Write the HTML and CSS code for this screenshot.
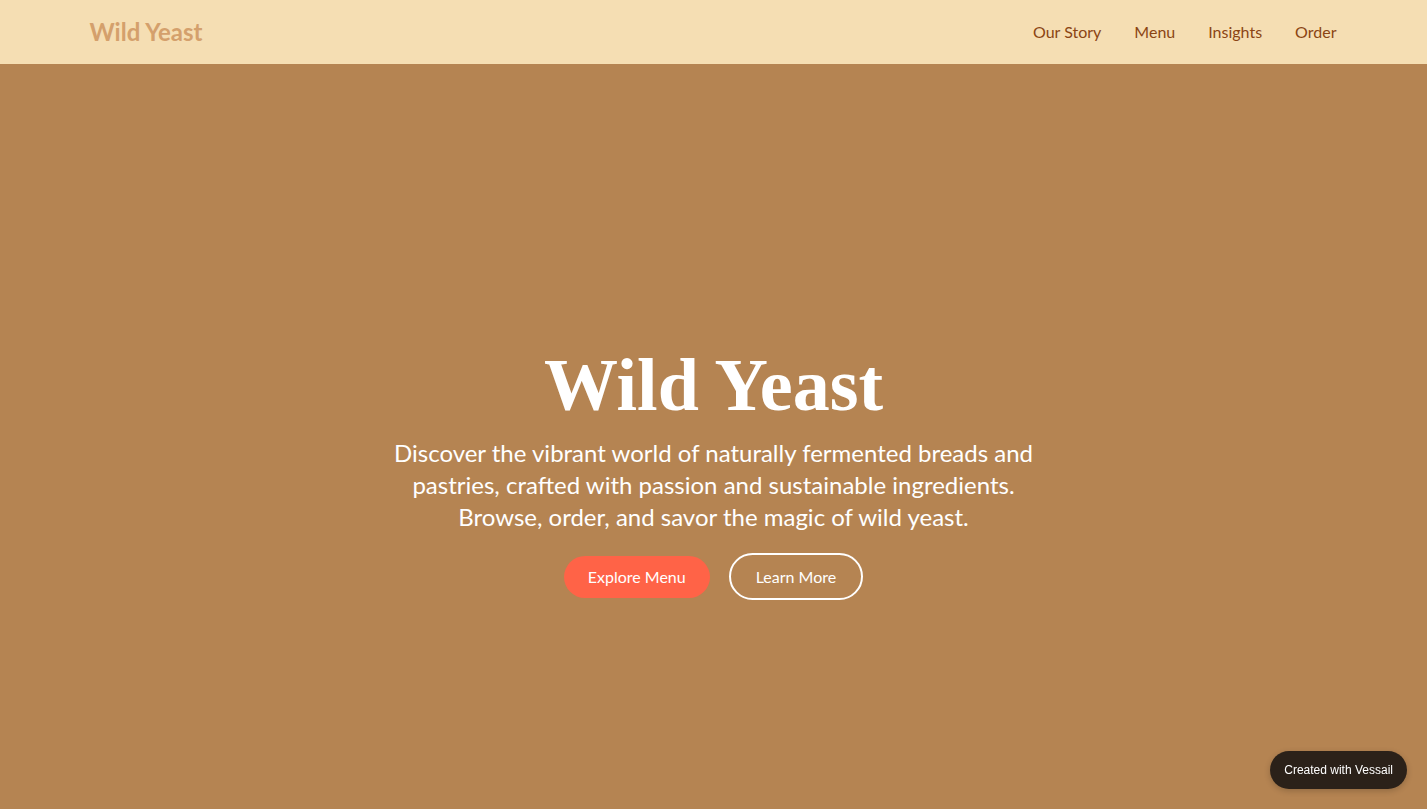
FILE: index.html
```html
<!DOCTYPE html>
<html lang="en">
<head>
<meta charset="utf-8">
<title>Wild Yeast</title>
<link rel="stylesheet" href="styles.css">
</head>
<body>
<header class="site-header">
  <div class="container header-inner">
    <a class="logo" href="#">Wild Yeast</a>
    <nav class="nav">
      <a href="#">Our Story</a>
      <a href="#">Menu</a>
      <a href="#">Insights</a>
      <a href="#">Order</a>
    </nav>
  </div>
</header>
<main class="hero">
  <div class="hero-content">
    <h1 class="hero-title">Wild Yeast</h1>
    <p class="hero-text">Discover the vibrant world of naturally fermented breads and pastries, crafted with passion and sustainable ingredients. Browse, order, and savor the magic of wild yeast.</p>
    <div class="hero-actions">
      <a class="btn btn-primary" href="#">Explore Menu</a>
      <a class="btn btn-outline" href="#">Learn More</a>
    </div>
  </div>
</main>
<a class="badge" href="#">Created with Vessail</a>
</body>
</html>
```
FILE: styles.css
```css
* { box-sizing: border-box; }
html, body { margin: 0; padding: 0; }
body {
  font-family: Lato, "Open Sans", sans-serif;
  background: #b58452;
  color: #fff;
}
a { text-decoration: none; }
.container {
  max-width: 1280px;
  margin: 0 auto;
  padding: 0 16px;
}
.site-header {
  background: #f5deb3;
  height: 64px;
}
.header-inner {
  height: 64px;
  display: flex;
  align-items: center;
  justify-content: space-between;
}
.logo {
  font-size: 24px;
  font-weight: 700;
  color: #d4a06c;
  line-height: 64px;
  padding-bottom: 1px;
}
.nav {
  display: flex;
  gap: 33px;
  padding-right: 1px;
  padding-bottom: 2px;
}
.nav a {
  color: #8b4513;
  font-size: 16px;
}
.hero {
  min-height: 100vh;
  padding-top: 12px;
  display: flex;
  align-items: center;
  justify-content: center;
  text-align: center;
}
.hero-content {
  max-width: 640px;
  display: flex;
  flex-direction: column;
  align-items: center;
}
.hero-title {
  font-family: "Liberation Serif", "Times New Roman", serif;
  font-weight: 700;
  font-size: 74px;
  line-height: 72px;
  margin: 0 0 16px;
  color: #fff;
}
.hero-text {
  font-size: 24px;
  line-height: 32px;
  margin: 0 0 20px;
}
.hero-actions {
  display: flex;
  align-items: center;
  gap: 19px;
}
.btn {
  display: inline-block;
  font-size: 16px;
  color: #fff;
  border-radius: 9999px;
}
.btn-primary {
  background: #ff6347;
  padding: 11px 24px;
  line-height: 20px;
}
.btn-outline {
  border: 2px solid #fff;
  padding: 11px 25px;
  line-height: 21px;
}
.badge {
  position: fixed;
  right: 20px;
  bottom: 20px;
  background: #2b2119;
  color: #fff;
  font-family: "Liberation Sans", Arial, sans-serif;
  font-size: 12px;
  line-height: 38px;
  padding: 0 14px;
  border-radius: 9999px;
  box-shadow: 0 2px 6px rgba(0,0,0,0.2);
}
```
